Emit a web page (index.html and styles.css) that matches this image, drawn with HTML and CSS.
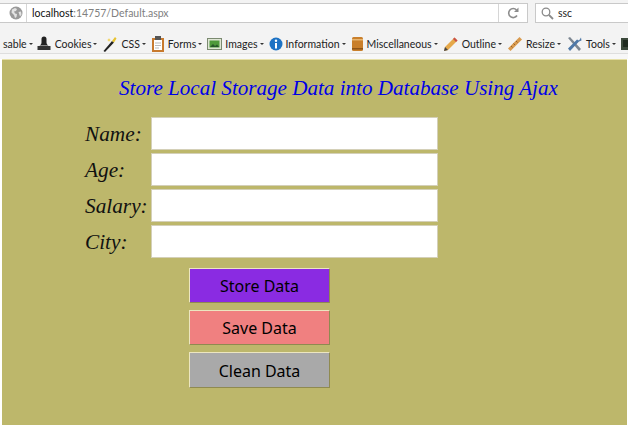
FILE: index.html
```html
<!DOCTYPE html>
<html lang="en">
<head>
<meta charset="utf-8">
<title>Store Local Storage Data into Database Using Ajax</title>
<link rel="stylesheet" href="styles.css">
</head>
<body>
<header class="chrome">
  <div class="navbar">
    <div class="urlbar">
      <svg class="globe" width="14" height="14" viewBox="0 0 14 14"><circle cx="7" cy="7" r="6.500" fill="#9a9a9a"/><path d="M3 3.500l3-1.500 2 1-1 2-2 .5 1 2 2 .5-.5 3-1.500 1-1-3-2.500-2.500z M9.500 6l2.500-.5.500 3-1.500 2z" fill="#e3e3e3"/></svg>
      <span class="url"><b class="host">localhost</b>:14757/Default.aspx</span>
      <span class="reload">
        <svg width="14" height="14" viewBox="0 0 14 14"><path d="M11 9.500A4.500 4.500 0 1 1 10.500 4" fill="none" stroke="#8c8c8c" stroke-width="1.600"/><path d="M12.500 1.500v4.500H8z" fill="#8c8c8c"/></svg>
      </span>
    </div>
    <div class="searchbar">
      <svg width="13" height="13" viewBox="0 0 13 13"><circle cx="5" cy="5" r="3.800" fill="none" stroke="#8a8a8a" stroke-width="1.300"/><path d="M8 8l4 4" stroke="#8a8a8a" stroke-width="1.800"/></svg>
      <span>ssc</span>
    </div>
  </div>
  <nav class="toolbar">
    <span class="tool first">sable<i class="caret"></i></span>
    <span class="tool"><svg width="16" height="16" viewBox="0 0 16 16"><path d="M5.500 3a2.500 2.500 0 0 1 5 0v3.500c0 1.500 1 2.500 2 3H3.500c1-.5 2-1.500 2-3z" fill="#222"/><path d="M1.500 10h13v4h-13z" fill="#333"/></svg>Cookies<i class="caret"></i></span>
    <span class="tool"><svg width="16" height="16" viewBox="0 0 16 16"><path d="M1.500 15L10 5l2 1.500L3 16z" fill="#222"/><path d="M10 5l2 1.500 2.500-4-1.500-1.500z" fill="#e8c22e"/><path d="M7 2l.5 1.500L9 4l-1.500.5L7 6l-.5-1.500L5 4l1.500-.5z" fill="#f2c933"/></svg>CSS<i class="caret"></i></span>
    <span class="tool"><svg width="14" height="16" viewBox="0 0 14 16"><rect x="1" y="2" width="12" height="14" fill="#c87a2e"/><rect x="3" y="4" width="8" height="10" fill="#fff"/><path d="M4 7h6M4 9.500h6M4 12h4" stroke="#b9b9b9"/><rect x="4" y="0" width="6" height="4" fill="#555"/></svg>Forms<i class="caret"></i></span>
    <span class="tool"><svg width="15" height="14" viewBox="0 0 15 14"><rect x=".5" y="1.500" width="14" height="11" fill="#dfe6d5" stroke="#7b8a70"/><rect x="2.500" y="3.500" width="10" height="7" fill="#4f9a3b"/><path d="M3 10l3-3 2 2 2-1.500 2 2.500z" fill="#27582a"/></svg>Images<i class="caret"></i></span>
    <span class="tool"><svg width="14" height="14" viewBox="0 0 14 14"><circle cx="7" cy="7" r="6.500" fill="#1d72c4"/><circle cx="7" cy="3.800" r="1.200" fill="#fff"/><rect x="6" y="6" width="2" height="5.500" fill="#fff"/></svg>Information<i class="caret"></i></span>
    <span class="tool"><svg width="13" height="16" viewBox="0 0 13 16"><rect x="1" y="1" width="11" height="14" rx="1.500" fill="#c97f2b"/><rect x="1" y="3" width="11" height="1.500" fill="#e8b56f"/><rect x="1" y="12" width="11" height="1.500" fill="#8e5518"/></svg>Miscellaneous<i class="caret"></i></span>
    <span class="tool"><svg width="16" height="16" viewBox="0 0 16 16"><path d="M1 15l1-4L11.500 1.500l3 3L5 14z" fill="#e5a84a"/><path d="M1 15l1-4 3 3z" fill="#444"/><path d="M11.500 1.500l3 3-1.500 1.500-3-3z" fill="#c9504a"/></svg>Outline<i class="caret"></i></span>
    <span class="tool"><svg width="16" height="16" viewBox="0 0 16 16"><path d="M1 12.500L12.500 1 15 3.500 3.500 15z" fill="#d99a4e"/><path d="M4 10l1.500 1.500M6.500 7.500L8 9M9 5l1.500 1.500" stroke="#96602a"/></svg>Resize<i class="caret"></i></span>
    <span class="tool"><svg width="17" height="16" viewBox="0 0 17 16"><path d="M2 2l2-1 11 12-2 2z" fill="#7d8792"/><path d="M15 1.500l-2 3-2-1-9 9 2 2.500 9-9.500 2.500-1z" fill="#4f79a8"/></svg>Tools<i class="caret"></i></span>
    <span class="tool"><svg width="14" height="14" viewBox="0 0 14 14"><rect width="14" height="12" y="1" fill="#3c4a3c"/><rect x="2" y="3" width="10" height="7" fill="#1f2a1f"/></svg></span>
  </nav>
</header>

<main class="page">
  <h1 class="title">Store Local Storage Data into Database Using Ajax</h1>
  <form class="fields">
    <label class="row"><span class="label">Name:</span><input class="field" type="text"></label>
    <label class="row"><span class="label">Age:</span><input class="field" type="text"></label>
    <label class="row"><span class="label">Salary:</span><input class="field" type="text"></label>
    <label class="row"><span class="label">City:</span><input class="field" type="text"></label>
    <div class="actions">
      <button class="btn btn-store" type="button">Store Data</button>
      <button class="btn btn-save" type="button">Save Data</button>
      <button class="btn btn-clean" type="button">Clean Data</button>
    </div>
  </form>
</main>
</body>
</html>
```
FILE: styles.css
```css
* { box-sizing: border-box; }
html, body { margin: 0; height: 100%; }
body {
  width: 628px;
  height: 428px;
  overflow: hidden;
  background: #fff;
  font-family: "Liberation Serif", serif;
}
.chrome {
  height: 59px;
  background: #f7f7f7;
  font-family: "Lato", sans-serif;
  color: #222;
}
.navbar {
  display: flex;
  gap: 7px;
  height: 24px;
  padding-top: 3px;
  background: #f3f3f3;
}
.urlbar, .searchbar {
  display: flex;
  align-items: center;
  height: 20px;
  background: #fff;
  border: 1px solid #c9c9c9;
  font-size: 10.500px;
}
.urlbar {
  width: 528px;
  border-left: 0;
  padding-left: 9px;
}
.globe { margin-right: 3px; }
.url {
  flex: 1;
  border-left: 1px solid #d6d6d6;
  padding-left: 5px;
  line-height: 18px;
  color: #808080;
}
.host { font-weight: 400; color: #111; }
.reload {
  display: flex;
  justify-content: center;
  align-items: center;
  width: 29px;
  height: 18px;
  border-left: 1px solid #d6d6d6;
}
.searchbar {
  flex: 1;
  border-right: 0;
  padding-left: 5px;
  gap: 4px;
}
.toolbar {
  display: flex;
  align-items: center;
  height: 30px;
  padding: 10px 0 0 3px;
  background: #f3f3f3;
  border-bottom: 1px solid #dedede;
  white-space: nowrap;
  overflow: hidden;
  font-size: 10.500px;
}
.tool {
  display: flex;
  align-items: center;
  flex: none;
  gap: 3px;
  margin-right: 5px;
}
.tool.first { margin-right: 3px; }
.caret {
  width: 0;
  height: 0;
  margin-left: -1px;
  border: 2px solid transparent;
  border-top: 2px solid #333;
  border-bottom: 0;
}
.page {
  height: 366px;
  margin: 0 1px 3px 2px;
  padding-top: 16px;
  background: #bdb76b;
  border-top: 1px solid #e6e0a8;
}
.title {
  margin: 0 0 17px 117px;
  font-size: 21.100px;
  font-weight: 400;
  font-style: italic;
  line-height: 24px;
  color: #0000e6;
}
.fields {
  display: flex;
  flex-direction: column;
  gap: 3px;
  padding-left: 83px;
}
.row { display: flex; align-items: center; }
.label {
  width: 66px;
  padding-top: 2px;
  font-size: 21.300px;
  font-style: italic;
  color: #111;
}
.field {
  width: 287px;
  height: 33px;
  background: #fff;
  border: 1px solid #d4d0b8;
  border-radius: 0;
  padding: 0;
}
.actions {
  display: flex;
  flex-direction: column;
  gap: 7px;
  align-items: flex-start;
  margin: 7px 0 0 104px;
}
.btn {
  width: 141px;
  height: 35px;
  padding: 1px 0 0;
  border: 1px solid;
  border-color: #ece6c0 #8f8a50 #8f8a50 #ece6c0;
  font-family: "Noto Sans", sans-serif;
  font-size: 16px;
  color: #000;
}
.btn-store { background: #8a2be2; }
.btn-save { background: #f08080; }
.btn-clean { height: 36px; background: #a9a9a9; }
```
